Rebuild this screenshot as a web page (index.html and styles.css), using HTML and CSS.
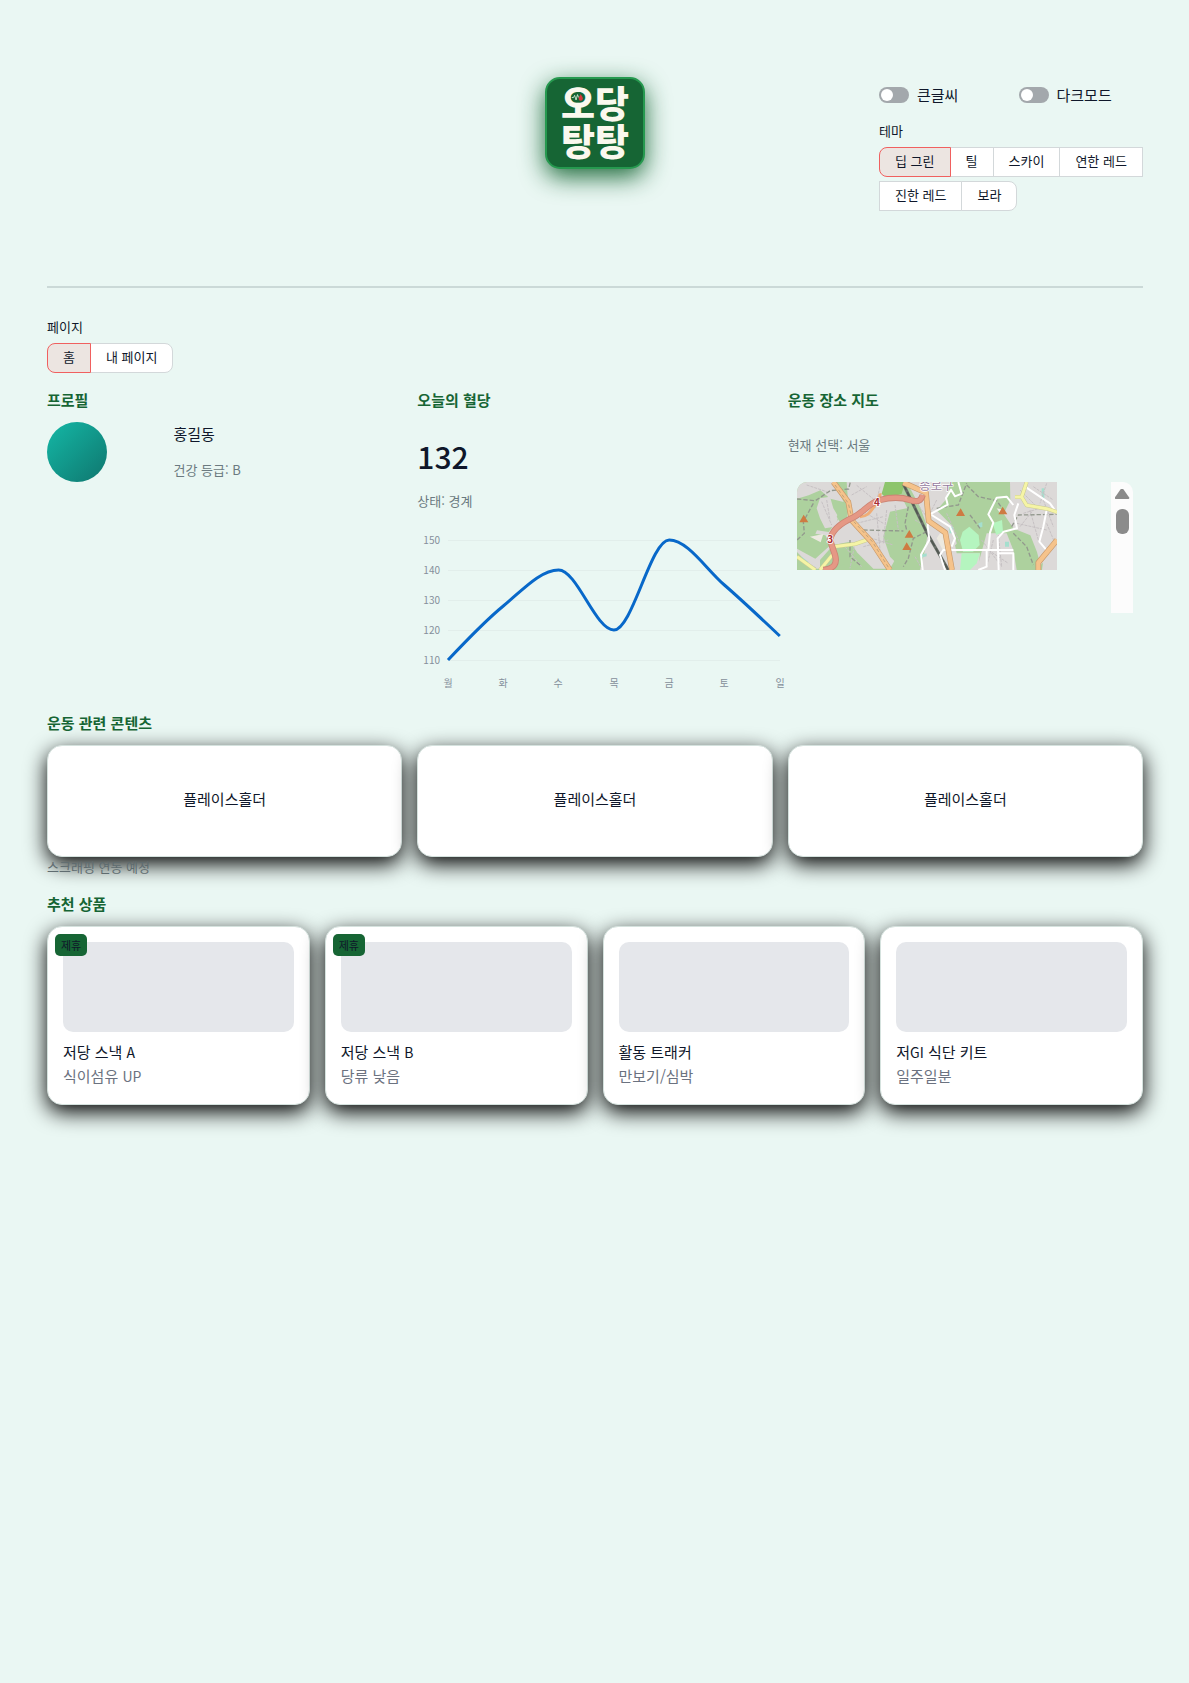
FILE: index.html
```html
<!DOCTYPE html>
<html lang="ko">
<head>
<meta charset="utf-8">
<meta name="viewport" content="width=device-width, initial-scale=1">
<title>오당탕탕</title>
<link rel="stylesheet" href="styles.css">
</head>
<body>
<div class="page">
  <header class="header">
    <h1 class="logo">
      <span>오당</span>
      <span>탕탕</span>
      <svg class="logo-mark" viewBox="0 0 36 24" aria-hidden="true">
        <ellipse cx="18" cy="12" rx="18" ry="12" fill="#166534"/>
        <path d="M2 12h5l3-6 4 13 4-15 3 8" fill="none" stroke="#d8ecd8" stroke-width="2.4"/>
        <path d="M27 2c3 6 6 9 6 13a6 6 0 0 1-12 0c0-4 4-8 6-13z" fill="#d8383e"/>
      </svg>
    </h1>
    <div class="settings">
      <div class="toggles">
        <label class="toggle"><input type="checkbox">큰글씨</label>
        <label class="toggle"><input type="checkbox">다크모드</label>
      </div>
      <div class="label">테마</div>
      <div class="segments">
        <button class="active" type="button">딥 그린</button><button type="button">틸</button><button type="button">스카이</button><button type="button">연한 레드</button><button type="button">진한 레드</button><button type="button">보라</button>
      </div>
    </div>
  </header>

  <nav class="nav">
    <div class="label">페이지</div>
    <div class="segments">
      <button class="active" type="button">홈</button><button type="button">내 페이지</button>
    </div>
  </nav>

  <main>
    <div class="overview">
      <section>
        <h2>프로필</h2>
        <div class="profile">
          <div class="avatar"></div>
          <div>
            <p class="name">홍길동</p>
            <p class="caption">건강 등급: B</p>
          </div>
        </div>
      </section>

      <section>
        <h2>오늘의 혈당</h2>
        <p class="glucose">132</p>
        <p class="caption">상태: 경계</p>
        <svg class="chart" width="372" height="164" viewBox="0 0 372 164" role="img" aria-label="주간 혈당">
          <path class="grid" d="M31 10.500H363M31 40.500H363M31 70.500H363M31 100.500H363M31 130.500H363"/>
          <g class="ticks-y">
            <text x="23" y="14">150</text><text x="23" y="44">140</text><text x="23" y="74">130</text><text x="23" y="104">120</text><text x="23" y="134">110</text>
          </g>
          <g class="ticks-x">
            <text x="31" y="157">월</text><text x="86" y="157">화</text><text x="141" y="157">수</text><text x="197" y="157">목</text><text x="252" y="157">금</text><text x="307" y="157">토</text><text x="363" y="157">일</text>
          </g>
          <path class="line" d="M31 130C49.400 110.500 67.900 91 86.300 76S123.200 40 141.600 40C160 40 178.500 100 196.900 100C215.300 100 233.800 10 252.200 10C270.600 10 289 39 307.400 55S344.300 88.500 362.800 106"/>
        </svg>
      </section>

      <section>
        <h2>운동 장소 지도</h2>
        <p class="caption place">현재 선택: 서울</p>
        <div class="map-frame">
          <svg class="map" viewBox="51 306 780 264" role="img" aria-label="서울 지도">
            <rect x="51" y="306" width="780" height="264" fill="#add19e"/>
            <g fill="#dcd9d8">
              <path d="M51 306h110l30 60-40-10-30-25-35 15-35 10z"/>
              <path d="M120 355l30-5 10 35 15 25-10 30-30 5-15-30-10-30z"/>
              <path d="M200 306h120v40l50 15 30 60-25 30-30 30 10 40-25 45h-50l-60-60-60 60h-60l-49-50v-10l55 30 45-40-15-30-30-5 5-10 35 5 30-40 30-25z"/>
              <path d="M380 306h130l-10 50-30 35 50 50 10 50-50 50 20 29h-80l15-60 10-60-25-70z"/>
              <path d="M460 430l60 40 10 50h70l-5 50h-120l-30-60z"/>
              <path d="M690 306h141v200l-50 50-10-40-20-50-50-20-30-45 20-40z"/>
              <path d="M620 460h60l20 50 10 60h-120z"/>
              <path d="M790 540l41-60v90h-45z"/>
            </g>
            <g fill="#add19e">
              <path d="M330 395l50-10 25 20 20 60-15 60-40 45-40-40-20-60z"/>
              <path d="M120 540l40-45 50-10 20 30-30 35-50 20h-30z"/>
              <path d="M185 380l20 5-5 40-15 10-15-25z"/>
            </g>
            <path d="M315 306h60l-10 35-45 15-15-15z" fill="#8dc56c"/>
            <g fill="#b5f5bf">
              <path d="M540 480l8-25 20-15 28 25 3 30-20 20h-30z"/>
              <path d="M638 430l28-10 3 35-20 10z"/>
              <path d="M545 520h55l-10 30-20 20h-30z"/>
            </g>
            <g fill="#a5dfce"><path d="M65 530l20 15-5 12-20-15zM508 440h10v20h-10zM675 485h12v15h-12zM785 325h8v30h-8zM205 400l14-8v15l-10 5zM420 525l20-5v9l-18 4zM595 430l12-4v15l-10 2z"/></g>
            <path d="M480 460l25 5 8 35-25 10-18-35zM90 470l40-8-8 25zM650 385l22 5-10 12z" fill="#ece9e0"/>
            <!-- fine street texture in the built-up blocks -->
            <g class="streets">
              <path d="M80 315l60 20M230 316l55 45M215 345l45-25M300 320l-15 65M125 365l30 70M140 360l10 60M250 395l60 35M230 430l80-20M260 470l80 25M250 500l75-20M290 400l10 110M320 390l-10 100M345 375l10 75M60 535l50 30M195 500l50 60M225 490l-15 75M395 350l45 60M405 420l35 20M405 530l20 35M720 330l50 50M730 400l65-20M710 430l90 20M750 390l25 90M720 440l40-50M790 360l30 80M800 430l25 60M640 480l-20 80M605 480l60 80M625 510l60 40M655 465l10 95M760 320l60 40M800 310l-20 60M500 400l40 90M470 360l-30 60"/>
            </g>
            <g class="trail">
              <path d="M51 357l55 5 45-30 55-5 5-21M100 370l-30 55 3 35-22 20M385 380l-10 50 5 20M250 450l120 3M440 455l-40 20-15 60-15 25M470 385l65-10 25-65M560 315l35 35 55 12 25 35M695 440l20-35 115-2M570 405l30 40M700 460l40 40 20 55M210 480v50l30 25"/>
            </g>
            <path d="M370 312l70 145 65 113" fill="none" stroke="#6a706a" stroke-width="9"/>
            <path d="M370 312l70 145 65 113" fill="none" stroke="#525852" stroke-width="5" stroke-dasharray="20 7"/>
            <g class="white-road">
              <path d="M535 306l10 35-20 8-12-20-15 25 5 20-55 30-5 35 5 40-25 45 5 46M455 405l55 35 15 35-10 25M495 570l-15-45 10-15h210M620 510v50l-25 10M700 375l-20-25-30 3-25 50 15 25-10 30-5 50M715 370l-12 35 8 40-40 10-18 20 3 95M735 320l75 50 21 30M800 390l-10 50-12 45 30 35M655 520h45v50"/>
            </g>
            <path class="yellow-edge" d="M51 530l55 40M120 570l45-55-5-15 65-8 35-12M705 351h20l15-45M725 351l15 25 60 10 31 10"/>
            <path class="yellow" d="M51 530l55 40M120 570l45-55-5-15 65-8 35-12M705 351h20l15-45M725 351l15 25 60 10 31 10"/>
            <g fill="none" stroke-linejoin="round">
              <path d="M160 306l45 60 10 55 60 65 55 84M370 308l68 30 8 85 50 35 20 112M775 570v-22l56-68" stroke="#c99a6b" stroke-width="17"/>
              <path d="M160 306l45 60 10 55 60 65 55 84M370 308l68 30 8 85 50 35 20 112M775 570v-22l56-68" stroke="#f5c38b" stroke-width="13"/>
              <path d="M165 315l40 55 12 50 60 65 50 80" stroke="#a69172" stroke-width="2" stroke-dasharray="10 8"/>
              <path d="M240 410c20 0 28-10 42-30s20-30 18-40" stroke="#f0ad76" stroke-width="9"/>
              <path d="M130 570c35-5 42-20 35-45l-15-45c5-30 30-50 70-68 32-16 50-46 80-52 30-8 60-10 90 0s35-4 38-15" stroke="#cc8474" stroke-width="19"/>
              <path d="M130 570c35-5 42-20 35-45l-15-45c5-30 30-50 70-68 32-16 50-46 80-52 30-8 60-10 90 0s35-4 38-15" stroke="#e59885" stroke-width="14"/>
            </g>
            <g fill="#ce7b42"><path d="M58 427l13-23 14 23zM374 473l14-23 13 23zM367 510l13-23 14 23zM528 408l14-23 13 23zM655 403l13-23 14 23z"/></g>
            <g class="shield"><text x="282" y="378">4</text><text x="142" y="488">3</text></g>
            <text class="district" x="418" y="331">종로구</text>
          </svg>
          <div class="scrollbar" aria-hidden="true"><span class="arrow"></span><span class="thumb"></span></div>
        </div>
      </section>
    </div>

    <section class="contents">
      <h2>운동 관련 콘텐츠</h2>
      <div class="content-grid">
        <div class="card placeholder">플레이스홀더</div>
        <div class="card placeholder">플레이스홀더</div>
        <div class="card placeholder">플레이스홀더</div>
      </div>
      <p class="caption">스크래핑 연동 예정</p>
    </section>

    <section class="products">
      <h2>추천 상품</h2>
      <div class="product-grid">
        <article class="card product"><span class="badge">제휴</span><div class="thumbnail"></div><p>저당 스낵 <span class="latin">A</span></p><p class="note">식이섬유 <span class="latin">UP</span></p></article>
        <article class="card product"><span class="badge">제휴</span><div class="thumbnail"></div><p>저당 스낵 <span class="latin">B</span></p><p class="note">당류 낮음</p></article>
        <article class="card product"><div class="thumbnail"></div><p>활동 트래커</p><p class="note">만보기/심박</p></article>
        <article class="card product"><div class="thumbnail"></div><p>저<span class="latin">GI</span> 식단 키트</p><p class="note">일주일분</p></article>
      </div>
    </section>
  </main>
</div>
</body>
</html>
```

FILE: styles.css
```css
* { box-sizing: border-box; }

body {
  margin: 0;
  background: #eaf7f3;
  color: #0f172a;
  font: 15px/24px "Noto Sans CJK KR", sans-serif;
}

h1, h2, p { margin: 0; }

h2 {
  color: #166534;
  font-size: 15px;
  font-weight: 700;
  line-height: 24px;
}

.page {
  min-height: 100vh;
  padding: 77px 46px 60px 47px;
}

.header {
  display: grid;
  grid-template-columns: 264px 1fr 264px;
  height: 211px;
  border-bottom: 2px solid #cbd9d7;
}

.logo {
  grid-column: 2;
  justify-self: center;
  position: relative;
  display: flex;
  flex-direction: column;
  align-items: center;
  justify-content: center;
  width: 100px;
  height: 92px;
  padding-bottom: 4px;
  border: 2px solid #26994f;
  border-radius: 15px;
  background: #166534;
  box-shadow: 0 8px 24px rgba(22, 101, 52, .95);
  color: #fbf8ee;
  font-size: 37px;
  font-weight: 900;
  line-height: 38px;
}

.logo-mark {
  position: absolute;
  left: 24px;
  top: 14px;
  width: 13px;
  height: 9px;
}

.settings { padding-top: 6px; }

.toggles {
  display: grid;
  grid-template-columns: 1fr 1fr;
  gap: 15px;
  margin-bottom: 14px;
}

.toggle {
  display: flex;
  align-items: center;
  gap: 8px;
}

.toggle input {
  appearance: none;
  width: 30px;
  height: 16px;
  margin: 0;
  padding: 2px;
  border-radius: 8px;
  background: #a3a8ac;
}

.toggle input::before {
  content: "";
  display: block;
  width: 12px;
  height: 12px;
  border-radius: 50%;
  background: #fff;
}

.toggle input:checked { background: #166534; }
.toggle input:checked::before { margin-left: 14px; }

.label {
  margin-bottom: 6px;
  font-size: 13px;
  line-height: 20px;
}

.segments {
  display: flex;
  flex-wrap: wrap;
  row-gap: 4px;
}

.segments button {
  height: 30px;
  margin: 0 -1px 0 0;
  padding: 0 15px 2px;
  border: 1px solid #d3d8da;
  background: #fff;
  color: inherit;
  font: inherit;
  font-size: 13px;
}

.segments button:first-child { border-radius: 8px 0 0 8px; }
.segments button:last-child { border-radius: 0 8px 8px 0; }

.segments .active {
  position: relative;
  border-color: #f0605f;
  background: #ece5e1;
}

.nav { padding-top: 29px; }

.overview {
  display: grid;
  grid-template-columns: repeat(3, minmax(0, 1fr));
  gap: 15px;
  padding-top: 15px;
}

.caption {
  color: #6b7a80;
  font-size: 13px;
  line-height: 20px;
}

.profile {
  display: grid;
  grid-template-columns: 1fr 2fr;
  gap: 12px;
  padding-top: 10px;
}

.avatar {
  width: 60px;
  height: 60px;
  border-radius: 50%;
  background: linear-gradient(135deg, #14b8a6, #0f766e);
}

.name { margin-bottom: 14px; }

.glucose {
  padding: 22px 0 13px;
  font-size: 30px;
  font-weight: 500;
  line-height: 44px;
}

.chart {
  display: block;
  margin-top: 19px;
  overflow: visible;
}

.chart text { fill: #858f9b; font-size: 10px; }
.ticks-y { text-anchor: end; }
.ticks-x { text-anchor: middle; }
.grid { stroke: #e2eeeb; }
.line { fill: none; stroke: #0868c9; stroke-width: 3; }

.place { margin-top: 23px; }

.map-frame {
  display: flex;
  align-items: flex-start;
  justify-content: space-between;
  margin: 27px 10px 0 9px;
}

.map {
  width: 260px;
  height: 88px;
  border-radius: 10px 0 0 0;
}

.streets, .trail, .white-road, .yellow, .yellow-edge { fill: none; stroke-linejoin: round; }
.streets { stroke: #c6c1c3; stroke-width: 3; stroke-dasharray: 9 3; }
.trail { stroke: #92988d; stroke-width: 4; stroke-dasharray: 13 6; }
.white-road { stroke: #fff; stroke-width: 6; }
.yellow-edge { stroke: #cbcc92; stroke-width: 12; }
.yellow { stroke: #f5f4a5; stroke-width: 9; }
.shield { fill: #a82d35; stroke: #fff; stroke-width: 5; paint-order: stroke; font-size: 30px; font-weight: 700; }
.district { fill: #957b9e; stroke: #fff; stroke-width: 4; paint-order: stroke; font-size: 37px; }

.scrollbar {
  display: flex;
  flex-direction: column;
  align-items: center;
  gap: 10px;
  width: 22px;
  height: 131px;
  padding-top: 7px;
  border-radius: 0 10px 0 0;
  background: #fcfcfc;
}

.arrow {
  width: 15px;
  height: 10px;
  background: #8b8b8b;
  clip-path: polygon(42% 0, 58% 0, 100% 90%, 94% 100%, 6% 100%, 0 90%);
}

.thumb {
  width: 13px;
  height: 25px;
  border-radius: 6px;
  background: #8b8b8b;
}

.contents { padding-top: 17px; }

.content-grid {
  display: grid;
  grid-template-columns: repeat(3, minmax(0, 1fr));
  gap: 15px;
  padding-top: 10px;
}

.contents .caption {
  position: relative;
  color: #5f6c70;
}

.card {
  border: 1px solid #d5e2de;
  border-radius: 15px;
  background: #fff;
  box-shadow: 0 7px 21px #000;
}

.placeholder {
  display: flex;
  align-items: center;
  justify-content: center;
  height: 112px;
  padding-bottom: 4px;
}

.products { padding-top: 15px; }

.product-grid {
  display: grid;
  grid-template-columns: repeat(4, minmax(0, 1fr));
  gap: 15px;
  padding-top: 10px;
}

.product {
  position: relative;
  padding: 15px 15px 16px;
}

.thumbnail {
  height: 90px;
  margin-bottom: 8px;
  border-radius: 10px;
  background: #e5e7eb;
}

.note { color: #6b7280; }
.latin { font-size: 14px; line-height: 20px; }

.badge {
  position: absolute;
  left: 7px;
  top: 7px;
  padding: 0 6px;
  border-radius: 5px;
  background: #166534;
  font-size: 11px;
  line-height: 22px;
}
```
